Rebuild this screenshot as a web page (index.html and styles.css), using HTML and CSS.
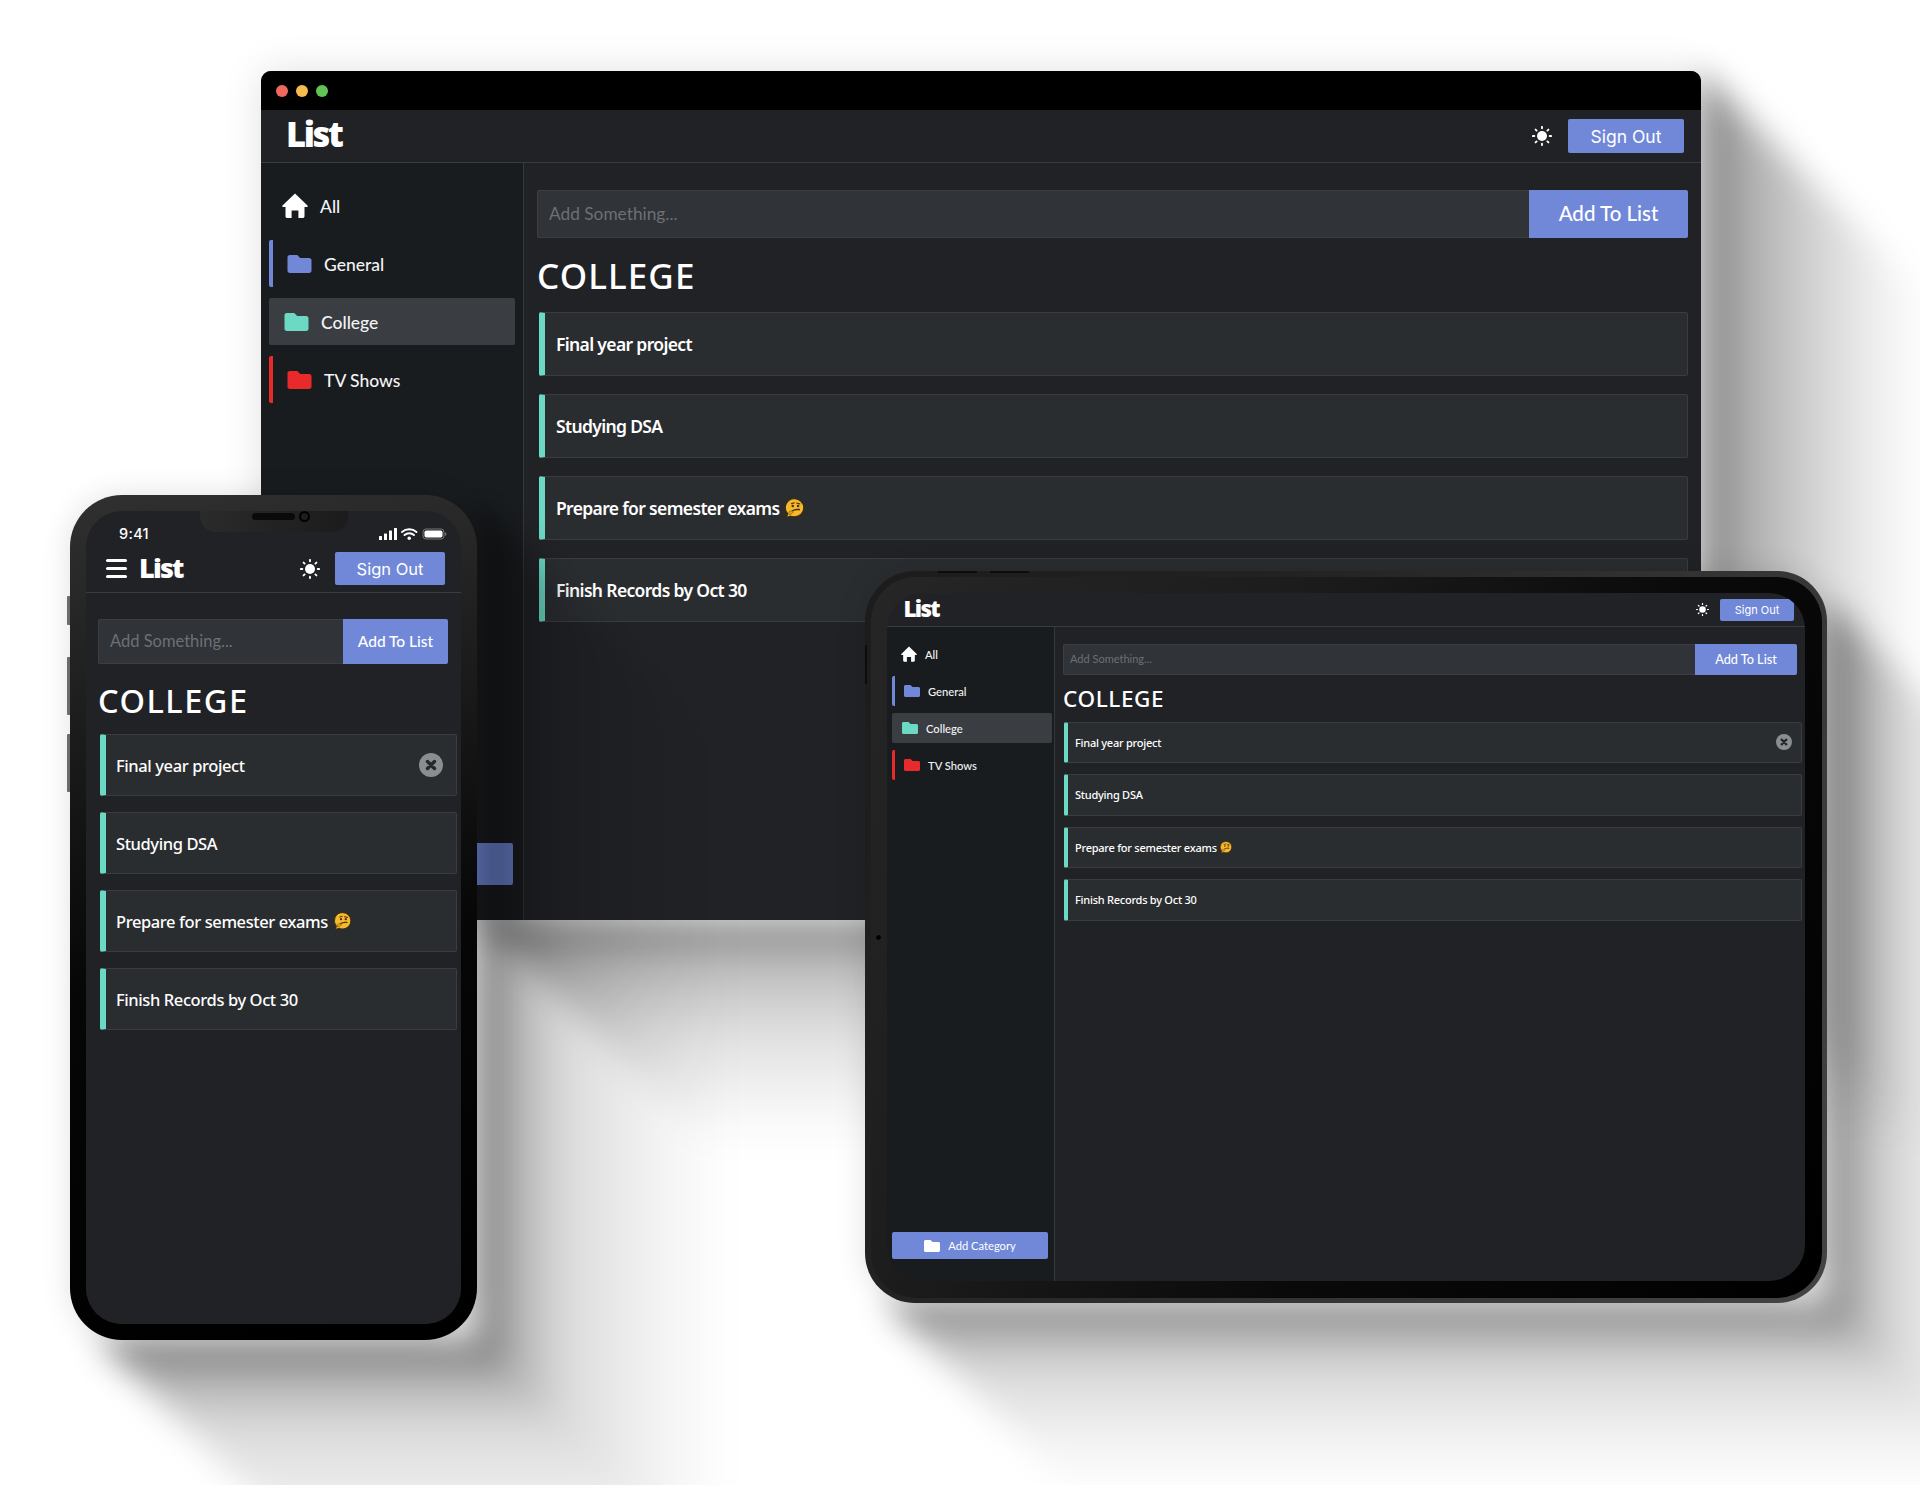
FILE: index.html
```html
<!DOCTYPE html>
<html lang="en">
<head>
<meta charset="utf-8">
<title>List</title>
<link rel="stylesheet" href="styles.css">
</head>
<body>
<svg class="defs" width="0" height="0" aria-hidden="true">
  <defs>
    <symbol id="i-folder" viewBox="0 64 512 384"><path d="M464 128H272l-64-64H48C21.49 64 0 85.49 0 112v288c0 26.51 21.49 48 48 48h416c26.51 0 48-21.49 48-48V176c0-26.51-21.49-48-48-48z"/></symbol>
    <symbol id="i-home" viewBox="0 0 26 25"><path d="M13 .5.500 12.500c-.6.6-.2 1.500.6 1.500H3.500v9.200c0 1 .8 1.800 1.800 1.800h4.300v-7.500h6.800V25h4.300c1 0 1.800-.8 1.800-1.800V14h2.400c.8 0 1.200-.9.6-1.500z"/></symbol>
    <symbol id="i-sun" viewBox="0 0 20 20"><circle cx="10" cy="10" r="5"/><g stroke="currentColor" stroke-width="1.9" stroke-linecap="round"><path d="M10 .9v1.4M10 17.7v1.4M.9 10h1.4M17.7 10h1.4M3.6 3.6l1 1M15.4 15.4l1 1M3.6 16.4l1-1M15.4 4.6l1-1"/></g></symbol>
    <symbol id="i-close" viewBox="0 0 24 24"><circle cx="12" cy="12" r="12" fill="#8b8e91"/><path d="M8.500 8.500l7 7M15.500 8.500l-7 7" stroke="#26282b" stroke-width="3.4" stroke-linecap="round"/></symbol>
    <symbol id="i-think" viewBox="1.300 .3 18.100 19.200"><path d="M10 1a8.7 8.7 0 0 1 8.7 8.7A8.6 8.6 0 0 1 10 18.400c-1.400 0-2.500-.3-3.600-.7L2.400 18.800l.9-3.500A8.600 8.600 0 0 1 10 1z" fill="#f5b92f" stroke="#3a2c0c" stroke-width="1"/><path d="M7 5.700l2.600-.8M12 5.300l3 .7" stroke="#5b3b0a" stroke-width="1.200" stroke-linecap="round" fill="none"/><circle cx="8.200" cy="8" r="1.200" fill="#4a2f08"/><circle cx="13.300" cy="8" r="1.200" fill="#4a2f08"/><path d="M7.500 12.800c2-1.400 4.500-1.700 7-1.400" stroke="#4a2f08" stroke-width="1.400" stroke-linecap="round" fill="none"/><path d="M4.600 13.400c1.500-1 3.500-.6 4.200.4l-2.600 2.200-1.800.2z" fill="#e8a21f" stroke="#7b5310" stroke-width=".6"/></symbol>
    <filter id="soft" x="-20%" y="-20%" width="140%" height="140%"><feGaussianBlur stdDeviation="16"/></filter>
    <linearGradient id="fade-dr" gradientUnits="userSpaceOnUse" x1="1701" y1="0" x2="1930" y2="0"><stop offset="0" stop-color="#000" stop-opacity=".5"/><stop offset=".2" stop-color="#000" stop-opacity=".32"/><stop offset=".5" stop-color="#000" stop-opacity=".17"/><stop offset=".8" stop-color="#000" stop-opacity=".05"/><stop offset="1" stop-color="#000" stop-opacity="0"/></linearGradient>
    <linearGradient id="fade-db" gradientUnits="userSpaceOnUse" x1="0" y1="920" x2="0" y2="1149"><stop offset="0" stop-color="#000" stop-opacity=".48"/><stop offset=".2" stop-color="#000" stop-opacity=".26"/><stop offset=".5" stop-color="#000" stop-opacity=".12"/><stop offset=".8" stop-color="#000" stop-opacity=".04"/><stop offset="1" stop-color="#000" stop-opacity="0"/></linearGradient>
    <linearGradient id="fade-pr" gradientUnits="userSpaceOnUse" x1="477" y1="0" x2="730" y2="0"><stop offset="0" stop-color="#000" stop-opacity=".58"/><stop offset=".15" stop-color="#000" stop-opacity=".3"/><stop offset=".35" stop-color="#000" stop-opacity=".14"/><stop offset=".7" stop-color="#000" stop-opacity=".05"/><stop offset="1" stop-color="#000" stop-opacity="0"/></linearGradient>
    <linearGradient id="fade-pb" gradientUnits="userSpaceOnUse" x1="0" y1="1340" x2="0" y2="1593"><stop offset="0" stop-color="#000" stop-opacity=".58"/><stop offset=".15" stop-color="#000" stop-opacity=".3"/><stop offset=".35" stop-color="#000" stop-opacity=".14"/><stop offset=".7" stop-color="#000" stop-opacity=".05"/><stop offset="1" stop-color="#000" stop-opacity="0"/></linearGradient>
    <linearGradient id="fade-tr" gradientUnits="userSpaceOnUse" x1="1827" y1="0" x2="2020" y2="0"><stop offset="0" stop-color="#000" stop-opacity=".55"/><stop offset=".15" stop-color="#000" stop-opacity=".3"/><stop offset=".35" stop-color="#000" stop-opacity=".15"/><stop offset=".7" stop-color="#000" stop-opacity=".05"/><stop offset="1" stop-color="#000" stop-opacity="0"/></linearGradient>
    <linearGradient id="fade-tb" gradientUnits="userSpaceOnUse" x1="0" y1="1303" x2="0" y2="1496"><stop offset="0" stop-color="#000" stop-opacity=".55"/><stop offset=".15" stop-color="#000" stop-opacity=".3"/><stop offset=".35" stop-color="#000" stop-opacity=".15"/><stop offset=".7" stop-color="#000" stop-opacity=".05"/><stop offset="1" stop-color="#000" stop-opacity="0"/></linearGradient>
  </defs>
</svg>

<main class="stage">
  <svg class="shadow-layer shadow-back" viewBox="0 0 1920 1485" aria-hidden="true">
    <g filter="url(#soft)">
      <polygon points="1701,71 1930,300 1930,1149 1701,920" fill="url(#fade-dr)"/>
      <polygon points="480,920 1701,920 1930,1149 709,1149" fill="url(#fade-db)"/>
    </g>
  </svg>

  <section class="device desktop">
    <div class="titlebar">
      <span class="dot dot-red"></span><span class="dot dot-yellow"></span><span class="dot dot-green"></span>
    </div>
    <div class="app">
      <header class="topbar">
        <span class="logo">List</span>
        <div class="topbar-right">
          <svg class="sun"><use href="#i-sun"/></svg>
          <button class="signout">Sign Out</button>
        </div>
      </header>
      <div class="app-body">
        <nav class="sidebar">
          <a class="cat cat-all"><svg class="home"><use href="#i-home"/></svg><span>All</span></a>
          <a class="cat cat-barred bar-blue"><svg class="folder tint-blue"><use href="#i-folder"/></svg><span>General</span></a>
          <a class="cat cat-active"><svg class="folder tint-teal"><use href="#i-folder"/></svg><span>College</span></a>
          <a class="cat cat-barred bar-red"><svg class="folder tint-red"><use href="#i-folder"/></svg><span>TV Shows</span></a>
          <button class="add-cat"><svg class="folder tint-white"><use href="#i-folder"/></svg><span>Add Category</span></button>
        </nav>
        <div class="content">
          <form class="add-row"><input class="add-input" placeholder="Add Something..."><button class="add-btn" type="button">Add To List</button></form>
          <h1 class="heading">COLLEGE</h1>
          <ul class="items">
            <li class="item">Final year project</li>
            <li class="item">Studying DSA</li>
            <li class="item">Prepare for semester exams <svg class="think"><use href="#i-think"/></svg></li>
            <li class="item">Finish Records by Oct 30</li>
          </ul>
        </div>
      </div>
    </div>
  </section>

  <svg class="shadow-layer shadow-front" viewBox="0 0 1920 1485" aria-hidden="true">
    <g filter="url(#soft)">
      <polygon points="477,500 730,753 730,1593 477,1340" fill="url(#fade-pr)"/>
      <polygon points="98,1340 477,1340 730,1593 351,1593" fill="url(#fade-pb)"/>
      <polygon points="1827,600 2020,793 2020,1496 1827,1303" fill="url(#fade-tr)"/>
      <polygon points="885,1303 1827,1303 2020,1496 1078,1496" fill="url(#fade-tb)"/>
    </g>
  </svg>

  <section class="device phone">
    <span class="side-btn side-a"></span><span class="side-btn side-b"></span><span class="side-btn side-c"></span>
    <div class="screen">
      <div class="notch"><span class="speaker"></span><span class="camera"></span></div>
      <div class="statusbar">
        <span class="clock">9:41</span>
        <svg class="status-icons" viewBox="0 0 68 14">
          <g fill="#fff"><rect x="0" y="9" width="3" height="4" rx=".6"/><rect x="5" y="6.500" width="3" height="6.500" rx=".6"/><rect x="10" y="3.500" width="3" height="9.500" rx=".6"/><rect x="15" y="1" width="3" height="12" rx=".6"/></g>
          <path d="M23 5a11 11 0 0 1 14.500 0M25.500 8a7.200 7.200 0 0 1 9.500 0" fill="none" stroke="#fff" stroke-width="1.900" stroke-linecap="round"/><circle cx="30.200" cy="11.300" r="1.700" fill="#fff"/>
          <rect x="44" y="2" width="21" height="10" rx="3" fill="none" stroke="#777" stroke-width="1"/><rect x="45.500" y="3.500" width="18" height="7" rx="1.800" fill="#fff"/><rect x="66" y="5.500" width="1.300" height="3" rx=".6" fill="#777"/>
        </svg>
      </div>
      <div class="app">
        <header class="topbar">
          <span class="burger"><i></i><i></i><i></i></span>
          <span class="logo">List</span>
          <div class="topbar-right">
            <svg class="sun"><use href="#i-sun"/></svg>
            <button class="signout">Sign Out</button>
          </div>
        </header>
        <div class="app-body">
          <div class="content">
            <form class="add-row"><input class="add-input" placeholder="Add Something..."><button class="add-btn" type="button">Add To List</button></form>
            <h1 class="heading">COLLEGE</h1>
            <ul class="items">
              <li class="item">Final year project<svg class="close"><use href="#i-close"/></svg></li>
              <li class="item">Studying DSA</li>
              <li class="item">Prepare for semester exams <svg class="think"><use href="#i-think"/></svg></li>
              <li class="item">Finish Records by Oct 30</li>
            </ul>
          </div>
        </div>
      </div>
    </div>
  </section>

  <section class="device tablet">
    <span class="edge-mark edge-top-a"></span><span class="edge-mark edge-top-b"></span><span class="edge-mark edge-left"></span>
    <span class="front-cam"></span>
    <div class="screen">
      <div class="app">
        <header class="topbar">
          <span class="logo">List</span>
          <div class="topbar-right">
            <svg class="sun"><use href="#i-sun"/></svg>
            <button class="signout">Sign Out</button>
          </div>
        </header>
        <div class="app-body">
          <nav class="sidebar">
            <a class="cat cat-all"><svg class="home"><use href="#i-home"/></svg><span>All</span></a>
            <a class="cat cat-barred bar-blue"><svg class="folder tint-blue"><use href="#i-folder"/></svg><span>General</span></a>
            <a class="cat cat-active"><svg class="folder tint-teal"><use href="#i-folder"/></svg><span>College</span></a>
            <a class="cat cat-barred bar-red"><svg class="folder tint-red"><use href="#i-folder"/></svg><span>TV Shows</span></a>
            <button class="add-cat"><svg class="folder tint-white"><use href="#i-folder"/></svg><span>Add Category</span></button>
          </nav>
          <div class="content">
            <form class="add-row"><input class="add-input" placeholder="Add Something..."><button class="add-btn" type="button">Add To List</button></form>
            <h1 class="heading">COLLEGE</h1>
            <ul class="items">
              <li class="item">Final year project<svg class="close"><use href="#i-close"/></svg></li>
              <li class="item">Studying DSA</li>
              <li class="item">Prepare for semester exams <svg class="think"><use href="#i-think"/></svg></li>
              <li class="item">Finish Records by Oct 30</li>
            </ul>
          </div>
        </div>
      </div>
    </div>
  </section>
</main>
</body>
</html>
```
FILE: styles.css
```css
* { box-sizing: border-box; }
html, body { margin: 0; padding: 0; background: #fff; }
.defs { position: absolute; }
.stage { position: relative; width: 1920px; height: 1485px; overflow: hidden; background: #fff; font-family: "Noto Sans", sans-serif; color: #fff; }
.shadow-layer { position: absolute; left: 0; top: 0; width: 1920px; height: 1485px; }
.shadow-back { z-index: 1; }
.shadow-front { z-index: 3; }

/* Devices sit on a free canvas */
.device { position: absolute; }
.desktop { z-index: 2; left: 261px; top: 71px; width: 1440px; height: 849px; display: flex; flex-direction: column; background: #212226; border-radius: 10px 10px 0 0; overflow: hidden; box-shadow: 0 0 40px rgba(0,0,0,.12);
  --nav-h: 53px; --logo: 34.500px; --logo-ls: -2.400px; --logo-left: 25px; --logo-up: 2px; --nav-right: 17px; --sun: 20px; --sun-gap: 16px; --so-w: 116px; --so-h: 34px; --so-font: 17.500px;
  --side-w: 263px; --side-pad: 19px 8px 35px 8px; --cat-h: 47px; --cat-gap: 11px; --cat-font: 17.500px; --cat-shift: 2px; --cat-pad: 15px; --all-pad: 13px; --bar-pad: 14px; --bar-w: 4px; --icon-gap: 12px; --folder-w: 25px; --folder-h: 18px; --home-w: 26px; --home-h: 25px; --home-gap: 12px;
  --add-h: 42px; --add-right: 2px;
  --pad: 27px 13px 0 13px; --row-h: 48px; --btn-w: 159px; --input-font: 17.300px; --input-pad: 11px; --btn-font: 20.500px;
  --head: 35px; --head-h: 74px; --head-shift: 0px; --head-ls: 1.100px; --item-ml: 2px; --item-mr: 0px; --item-h: 64px; --item-gap: 18px; --item-bar: 6px; --item-pad: 11px; --item-font: 17.500px; --item-ls: -.65px; --item-wt: 600; --think: 20px; --close: 24px; }
.phone { z-index: 4; left: 70px; top: 495px; width: 407px; height: 845px; padding: 16px; background: linear-gradient(170deg, #303030 0%, #1a1a1a 28%, #060606 55%, #000 100%); border-radius: 52px; box-shadow: 0 0 30px rgba(0,0,0,.12);
  --nav-h: 48px; --logo: 27px; --logo-ls: -1.800px; --logo-left: 0px; --logo-up: 1px; --nav-right: 16px; --sun: 20px; --sun-gap: 15px; --so-w: 110px; --so-h: 33px; --so-font: 16.500px;
  --pad: 26px 13px 0 12px; --row-h: 45px; --btn-w: 105px; --input-font: 16.500px; --input-pad: 11px; --btn-font: 15.500px;
  --head: 32.500px; --head-h: 70px; --head-shift: 3px; --head-ls: 1.500px; --item-ml: 2px; --item-mr: -9px; --item-h: 62px; --item-gap: 16px; --item-bar: 6px; --item-pad: 10px; --item-font: 16.500px; --item-ls: -.4px; --item-wt: 500; --think: 18px; --close: 24px; --close-right: 13px; }
.tablet { z-index: 4; left: 865px; top: 571px; width: 962px; height: 732px; padding: 22px; background: linear-gradient(120deg, #1c1c1c 0%, #222 30%, #333 60%, #444 100%); border-radius: 50px; box-shadow: 0 0 30px rgba(0,0,0,.12);
  --nav-h: 34px; --logo: 22.400px; --logo-ls: -1.700px; --logo-left: 16.500px; --logo-up: 0px; --nav-right: 11px; --sun: 13px; --sun-gap: 11px; --so-w: 74px; --so-h: 22px; --so-font: 11px;
  --side-w: 168px; --side-pad: 12px 2px 22px 5px; --cat-h: 30px; --cat-gap: 7px; --cat-font: 11.200px; --cat-shift: 0px; --cat-pad: 10px; --all-pad: 9px; --bar-pad: 9px; --bar-w: 3px; --icon-gap: 8px; --folder-w: 16px; --folder-h: 12px; --home-w: 16px; --home-h: 16px; --home-gap: 8px;
  --add-h: 27px; --add-right: 4px;
  --pad: 17px 8px 0 8px; --row-h: 31px; --btn-w: 102px; --input-font: 11px; --input-pad: 6px; --btn-font: 12.700px;
  --head: 22.500px; --head-h: 46.500px; --head-shift: 0px; --head-ls: .6px; --item-ml: 1px; --item-mr: -5px; --item-h: 41.500px; --item-gap: 11px; --item-bar: 4px; --item-pad: 7px; --item-font: 11px; --item-ls: -.25px; --item-wt: 500; --think: 12.500px; --close: 16px; --close-right: 9px; }
.tablet::before { content: ""; position: absolute; inset: 5.500px; border-radius: 45px; background: linear-gradient(120deg, #262626 0%, #1d1d1d 30%, #0a0a0a 60%, #000 100%); }

.screen { position: relative; display: flex; flex-direction: column; width: 100%; height: 100%; overflow: hidden; background: #212226; border-radius: 36px; }

/* Mac window chrome */
.titlebar { flex: none; display: flex; align-items: center; gap: 8px; height: 39px; padding-left: 15px; background: #000; }
.dot { width: 12px; height: 12px; border-radius: 50%; }
.dot-red { background: #ee6a5f; }
.dot-yellow { background: #f5bd4f; }
.dot-green { background: #61c454; }

/* Phone details */
.notch { position: absolute; z-index: 2; left: 114px; top: 0; width: 148px; height: 21px; display: flex; justify-content: center; align-items: flex-start; gap: 4px; padding-top: 2px; background: linear-gradient(90deg, #2b2b2b, #1b1b1b); border-radius: 0 0 16px 16px; }
.speaker { width: 43px; height: 7px; margin-left: 13px; background: #0a0a0a; border-radius: 4px; }
.camera { width: 11px; height: 11px; margin-top: -2px; border: 2px solid #000; border-radius: 50%; background: #1d1d1d; }
.statusbar { flex: none; height: 34px; display: flex; align-items: flex-end; justify-content: space-between; padding: 0 14px 2px 33px; }
.clock { font-family: Inter, sans-serif; font-size: 14.500px; line-height: 18px; font-weight: 500; letter-spacing: .3px; }
.status-icons { width: 68px; height: 14px; margin-bottom: 2px; }
.side-btn { position: absolute; left: -3px; width: 3px; background: #6b6b6b; border-radius: 1px 0 0 1px; }
.side-a { top: 101px; height: 29px; }
.side-b { top: 162px; height: 58px; }
.side-c { top: 239px; height: 58px; }
.burger { flex: none; display: flex; flex-direction: column; gap: 5px; width: 21px; margin-left: 20px; margin-right: 12px; }
.burger i { display: block; height: 3px; background: #fff; border-radius: 2px; }

/* Tablet details */
.edge-mark { position: absolute; background: #0c0c0c; }
.edge-top-a { left: 73px; top: 0; width: 39px; height: 1.500px; }
.edge-top-b { left: 125px; top: 0; width: 39px; height: 1.500px; }
.edge-left { left: 0; top: 74px; width: 1.500px; height: 39px; }
.front-cam { position: absolute; left: 10px; top: 363px; width: 7px; height: 7px; border-radius: 50%; background: #000; border: 1px solid #2b2b2b; }

/* App */
.app { flex: 1; min-height: 0; display: flex; flex-direction: column; background: #212226; }
.topbar { flex: none; height: var(--nav-h); display: flex; align-items: center; padding-left: var(--logo-left); padding-right: var(--nav-right); border-bottom: 1px solid #3a3c3f; }
.logo { margin-top: calc(var(--logo-up) * -2); font-family: "Noto Sans", sans-serif; font-weight: 900; font-size: var(--logo); line-height: 1; letter-spacing: var(--logo-ls); }
.topbar-right { margin-left: auto; display: flex; align-items: center; gap: var(--sun-gap); }
.sun { width: var(--sun); height: var(--sun); color: #fff; fill: #fff; }
.signout { width: var(--so-w); height: var(--so-h); padding: 0; border: 0; border-radius: 2px; background: #7188d9; color: #fff; font-family: Inter, sans-serif; font-size: var(--so-font); font-weight: 400; cursor: pointer; }
.app-body { flex: 1; min-height: 0; display: flex; }

.sidebar { flex: none; width: var(--side-w); display: flex; flex-direction: column; gap: var(--cat-gap); padding: var(--side-pad); background: #191c1f; border-right: 1px solid #35373a; }
.cat { height: var(--cat-h); display: flex; align-items: center; gap: var(--icon-gap); padding-left: var(--cat-pad); font-family: Lato, sans-serif; font-size: var(--cat-font); font-weight: 500; color: #f2f3f4; border-radius: 2px; }
.cat span { padding-top: var(--cat-shift); }
.cat-all { padding-left: var(--all-pad); gap: var(--home-gap); }
.cat-barred { padding-left: var(--bar-pad); border-left: var(--bar-w) solid; }
.bar-blue { border-left-color: #7188d9; }
.bar-red { border-left-color: #e92a2a; }
.cat-active { background: #3a3d41; }
.folder { flex: none; width: var(--folder-w); height: var(--folder-h); }
.home { flex: none; width: var(--home-w); height: var(--home-h); fill: #fff; }
.tint-blue { fill: #7188d9; }
.tint-teal { fill: #6bd9c4; }
.tint-red { fill: #e92a2a; }
.tint-white { fill: #fff; }
.add-cat { margin-top: auto; margin-right: var(--add-right); height: var(--add-h); display: flex; align-items: center; justify-content: center; gap: var(--icon-gap); border: 0; border-radius: 2px; background: #7188d9; color: #fff; font-family: Lato, sans-serif; font-size: var(--cat-font); cursor: pointer; }

.content { flex: 1; min-width: 0; display: flex; flex-direction: column; padding: var(--pad); }
.add-row { flex: none; display: flex; height: var(--row-h); margin: 0; }
.add-input { flex: 1; min-width: 0; height: 100%; padding: 0 var(--input-pad) 2px; border: 1px solid #3c3e42; border-right: 0; border-radius: 2px 0 0 2px; outline: 0; background: #303338; color: #fff; font-family: Lato, sans-serif; font-size: var(--input-font); }
.add-input::placeholder { color: #6d7074; opacity: 1; }
.add-btn { flex: none; width: var(--btn-w); height: 100%; padding: 0 0 2px; border: 0; border-radius: 0 2px 2px 0; background: #7188d9; color: #fff; font-family: Lato, sans-serif; font-size: var(--btn-font); font-weight: 500; cursor: pointer; }
.heading { flex: none; height: var(--head-h); margin: 0; padding-top: var(--head-shift); display: flex; align-items: center; font-family: "Noto Sans", sans-serif; font-size: var(--head); font-weight: 500; letter-spacing: var(--head-ls); }
.items { display: flex; flex-direction: column; gap: var(--item-gap); margin: 0 var(--item-mr) 0 var(--item-ml); padding: 0; list-style: none; }
.item { position: relative; height: var(--item-h); display: flex; align-items: center; padding-left: var(--item-pad); background: #2a2d30; border: 1px solid #3a3c3f; border-left: var(--item-bar) solid #6bd9c4; border-radius: 2px; font-family: "Noto Sans", sans-serif; font-size: var(--item-font); font-weight: var(--item-wt); letter-spacing: var(--item-ls); white-space: pre; }
.think { flex: none; width: var(--think); height: var(--think); margin-left: .1em; }
.close { width: var(--close); height: var(--close); margin-left: auto; margin-right: var(--close-right); }
```
